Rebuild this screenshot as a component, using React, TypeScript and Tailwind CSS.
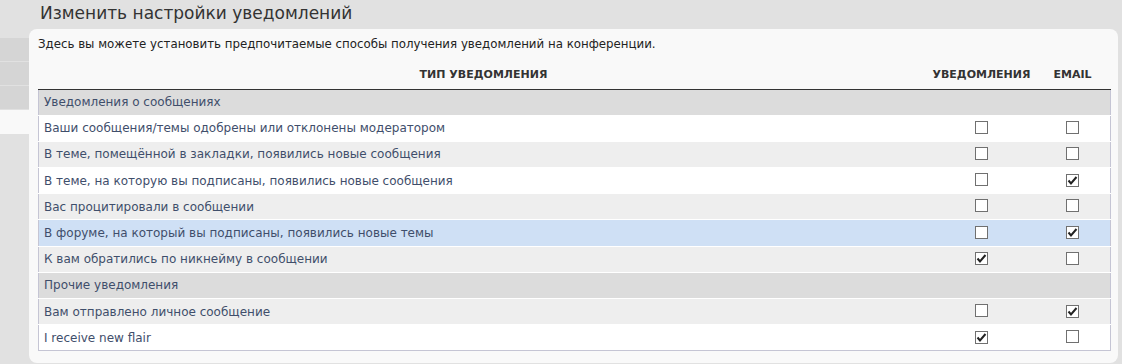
import React from "react";

type Row =
  | { kind: "section"; label: string }
  | { kind: "item"; label: string; notify: boolean; email: boolean; bg: string };

const rows: Row[] = [
  { kind: "section", label: "Уведомления о сообщениях" },
  { kind: "item", label: "Ваши сообщения/темы одобрены или отклонены модератором", notify: false, email: false, bg: "bg-white" },
  { kind: "item", label: "В теме, помещённой в закладки, появились новые сообщения", notify: false, email: false, bg: "bg-[#eeeeee]" },
  { kind: "item", label: "В теме, на которую вы подписаны, появились новые сообщения", notify: false, email: true, bg: "bg-white" },
  { kind: "item", label: "Вас процитировали в сообщении", notify: false, email: false, bg: "bg-[#eeeeee]" },
  { kind: "item", label: "В форуме, на который вы подписаны, появились новые темы", notify: false, email: true, bg: "bg-[#cfe0f5]" },
  { kind: "item", label: "К вам обратились по никнейму в сообщении", notify: true, email: false, bg: "bg-[#eeeeee]" },
  { kind: "section", label: "Прочие уведомления" },
  { kind: "item", label: "Вам отправлено личное сообщение", notify: false, email: true, bg: "bg-[#eeeeee]" },
  { kind: "item", label: "I receive new flair", notify: true, email: false, bg: "bg-white" },
];

const Box = ({ checked }: { checked: boolean }) => (
  <span className="inline-flex h-[13px] w-[13px] items-center justify-center border border-[#707070] bg-white">
    {checked && (
      <svg width="11" height="11" viewBox="0 0 11 11">
        <path d="M1.5 5.5 L4 8.5 L9.5 2" fill="none" stroke="#222" strokeWidth="2" />
      </svg>
    )}
  </span>
);

export default function App() {
  return (
    <div
      className="h-[364px] w-[1122px] overflow-hidden bg-[#e1e1e1] text-[#333]"
      style={{ fontFamily: '"DejaVu Sans", Verdana, sans-serif' }}
    >
      <div className="h-[29px] pl-[40px] pt-[3px] text-[17px] leading-[20px] text-[#333]">
        Изменить настройки уведомлений
      </div>
      <div className="flex">
        <div className="flex w-[29px] flex-col gap-px pt-[9px]">
          <div className="h-[23px] bg-[#d5d5d5]" />
          <div className="h-[23px] bg-[#d5d5d5]" />
          <div className="h-[23px] bg-[#d5d5d5]" />
          <div className="h-[24px] bg-[#f9f9f9]" />
        </div>
        <div className="mr-[4px] flex-1 rounded-lg bg-[#f9f9f9] pb-[12px] pl-[9px] pr-[7px] pt-[8px]">
          <p className="h-[25px] text-[11.8px] leading-[14px] text-[#222]">
            Здесь вы можете установить предпочитаемые способы получения уведомлений на конференции.
          </p>
          <table className="w-full border-collapse text-[12px]">
            <thead>
              <tr className="h-[27px] border-b border-[#333] text-[11px] font-bold uppercase text-[#333]">
                <th className="text-center">Тип уведомления</th>
                <th className="w-[106px] text-center">Уведомления</th>
                <th className="w-[76px] text-center">Email</th>
              </tr>
            </thead>
            <tbody className="border-x border-b border-[#c5c5d4]">
              {rows.map((r, i) =>
                r.kind === "section" ? (
                  <tr key={i} className="h-[26.2px] border-t border-white bg-[#dcdcdc] text-[#3f4e6b]">
                    <td colSpan={3} className="px-[5px]">
                      {r.label}
                    </td>
                  </tr>
                ) : (
                  <tr key={i} className={`h-[26.2px] border-t border-white text-[#3f4e6b] ${r.bg}`}>
                    <td className="px-[5px]">{r.label}</td>
                    <td className="text-center align-middle">
                      <span className="inline-flex pt-[3px]"><Box checked={r.notify} /></span>
                    </td>
                    <td className="text-center align-middle">
                      <span className="inline-flex pt-[3px]"><Box checked={r.email} /></span>
                    </td>
                  </tr>
                )
              )}
            </tbody>
          </table>
        </div>
      </div>
    </div>
  );
}
